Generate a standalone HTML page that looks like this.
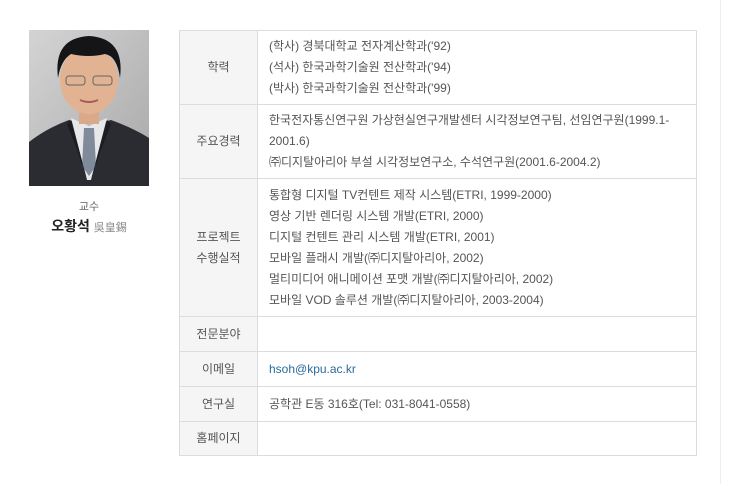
<!DOCTYPE html>
<html><head><meta charset="utf-8"><style>
*{margin:0;padding:0;box-sizing:border-box}
body{width:731px;height:484px;background:#fff;font-family:"Liberation Sans","Noto Sans CJK KR",sans-serif;color:#555;font-size:12px;position:relative;overflow:hidden}
.photo{position:absolute;left:29px;top:30px;width:120px;height:156px}
.cap{position:absolute;left:29px;width:120px;text-align:center}
table{position:absolute;left:179px;top:30px;width:518px;border-collapse:collapse}
td{border:1px solid #dcdcdc;line-height:21px;padding:0 11px}
td.l{width:78px;background:#f5f5f5;text-align:center;padding:0;color:#555}
a{color:#2a6b9c;text-decoration:none}
.sb{position:absolute;left:720px;top:0;width:1px;height:484px;background:#eee}
</style></head><body>
<svg class="photo" viewBox="0 0 120 156">
<defs><linearGradient id="bg" x1="0" y1="0" x2="1" y2="1"><stop offset="0" stop-color="#d4d4d4"/><stop offset="1" stop-color="#a8a8a8"/></linearGradient></defs>
<rect width="120" height="156" fill="url(#bg)"/>
<path d="M0 156 L0 112 Q18 98 40 90 L60 96 L82 90 Q104 98 120 108 L120 156Z" fill="#2a2c31"/>
<path d="M42 88 L58 150 L62 150 L78 88 L60 96Z" fill="#e8e8ea"/>
<path d="M55 98 L65 98 L67 136 L60 146 L53 136Z" fill="#7f8a9a"/>
<path d="M42 90 L58 150 L48 120 L38 94Z" fill="#1c1d21"/>
<path d="M78 90 L62 150 L72 120 L82 94Z" fill="#1c1d21"/>
<rect x="50" y="66" width="20" height="28" fill="#d9a98a"/>
<ellipse cx="60" cy="50" rx="29" ry="34" fill="#e2b393"/>
<path d="M29 48 Q24 8 60 6 Q96 8 91 48 Q88 26 76 24 Q60 28 42 24 Q32 30 29 48Z" fill="#151517"/>
<rect x="37" y="46" width="19" height="9" rx="3" fill="none" stroke="#666" stroke-width="1"/>
<rect x="64" y="46" width="19" height="9" rx="3" fill="none" stroke="#666" stroke-width="1"/>
<path d="M51 70 Q60 74 69 70" stroke="#a85a55" stroke-width="2" fill="none"/>
</svg>
<div class="cap" style="top:198px;font-size:11px;color:#666">교수</div>
<div class="cap" style="top:216px;font-size:14px;color:#222;font-weight:bold">오황석 <span style="font-size:11px;color:#888;font-weight:normal">吳皇錫</span></div>
<table>
<tr style="height:74px"><td class="l">학력</td><td>(학사) 경북대학교 전자계산학과('92)<br>(석사) 한국과학기술원 전산학과('94)<br>(박사) 한국과학기술원 전산학과('99)</td></tr>
<tr style="height:74px"><td class="l">주요경력</td><td>한국전자통신연구원 가상현실연구개발센터 시각정보연구팀, 선임연구원(1999.1-2001.6)<br>㈜디지탈아리아 부설 시각정보연구소, 수석연구원(2001.6-2004.2)</td></tr>
<tr style="height:138px"><td class="l">프로젝트<br>수행실적</td><td>통합형 디지털 TV컨텐트 제작 시스템(ETRI, 1999-2000)<br>영상 기반 렌더링 시스템 개발(ETRI, 2000)<br>디지털 컨텐트 관리 시스템 개발(ETRI, 2001)<br>모바일 플래시 개발(㈜디지탈아리아, 2002)<br>멀티미디어 애니메이션 포맷 개발(㈜디지탈아리아, 2002)<br>모바일 VOD 솔루션 개발(㈜디지탈아리아, 2003-2004)</td></tr>
<tr style="height:35px"><td class="l">전문분야</td><td></td></tr>
<tr style="height:35px"><td class="l">이메일</td><td><a>hsoh@kpu.ac.kr</a></td></tr>
<tr style="height:35px"><td class="l">연구실</td><td>공학관 E동 316호(Tel: 031-8041-0558)</td></tr>
<tr style="height:34px"><td class="l">홈페이지</td><td></td></tr>
</table>
<div class="sb"></div>
</body></html>
